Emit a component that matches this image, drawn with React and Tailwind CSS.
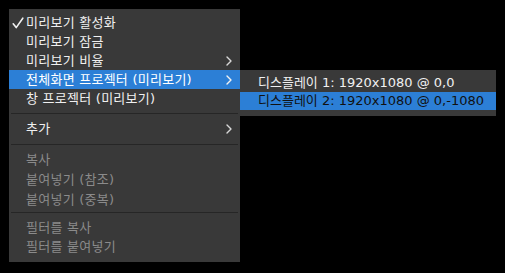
import React from "react";

const Chevron = ({ dark }) => (
  <svg width="6" height="10" viewBox="0 0 6 10" className="shrink-0">
    <path
      d="M1 1 L5 5 L1 9"
      fill="none"
      stroke={dark ? "#f2f2f2" : "#d8d8d8"}
      strokeWidth="1.4"
      strokeLinecap="round"
      strokeLinejoin="round"
    />
  </svg>
);

const Check = () => (
  <svg width="12" height="12" viewBox="0 0 12 12" className="absolute left-[3px] top-[4px]">
    <path
      d="M1.2 6.8 L4.2 10.6 L10.8 1.2"
      fill="none"
      stroke="#f0f0f0"
      strokeWidth="1.6"
      strokeLinecap="round"
      strokeLinejoin="round"
    />
  </svg>
);

const Item = ({ label, checked, sub, active, disabled, h = "h-[19px]" }) => (
  <div
    className={`relative flex items-center ${h} pl-[17px] pr-[8px] ${
      active ? "bg-[#2c7fd6] text-white" : disabled ? "text-[#8b8b8b]" : "text-[#f0f0f0]"
    }`}
  >
    {checked && <Check />}
    <span className="flex-1 whitespace-nowrap tracking-[0.25px]">{label}</span>
    {sub && <Chevron dark={active} />}
  </div>
);

const Sep = ({ top, bottom }) => (
  <div className={`${top} ${bottom} mx-[2px] h-px bg-[#262626]`} />
);

export default function App() {
  return (
    <div
      className="relative w-[505px] h-[273px] bg-black text-[13px] overflow-hidden"
      style={{ fontFamily: '"DejaVu Sans", "Noto Sans CJK KR", sans-serif' }}
    >
      {/* main menu */}
      <div className="absolute left-[9px] top-[9px] w-[231px] h-[253px] bg-[#393939] pt-[4px]">
        <Item label="미리보기 활성화" checked />
        <Item label="미리보기 잠금" />
        <Item label="미리보기 비율" sub />
        <Item label="전체화면 프로젝터 (미리보기)" sub active />
        <Item label="창 프로젝터 (미리보기)" />
        <Sep top="mt-[5px]" bottom="mb-[5px]" />
        <Item label="추가" sub />
        <Sep top="mt-[6px]" bottom="mb-[5px]" />
        <Item label="복사" disabled h="h-[20px]" />
        <Item label="붙여넣기 (참조)" disabled h="h-[20px]" />
        <Item label="붙여넣기 (중복)" disabled />
        <Sep top="mt-[3px]" bottom="mb-[5px]" />
        <Item label="필터를 복사" disabled />
        <Item label="필터를 붙여넣기" disabled />
      </div>

      {/* submenu */}
      <div className="absolute left-[240px] top-[70px] w-[256px] h-[46px] bg-[#393939] pt-[4px]">
        <div className="flex items-center h-[18px] pl-[18px] text-[#f0f0f0] whitespace-nowrap">
          디스플레이 1: 1920x1080 @ 0,0
        </div>
        <div className="flex items-center h-[18px] pl-[18px] bg-[#2c7fd6] text-[#111111] whitespace-nowrap">
          디스플레이 2: 1920x1080 @ 0,-1080
        </div>
      </div>
    </div>
  );
}
